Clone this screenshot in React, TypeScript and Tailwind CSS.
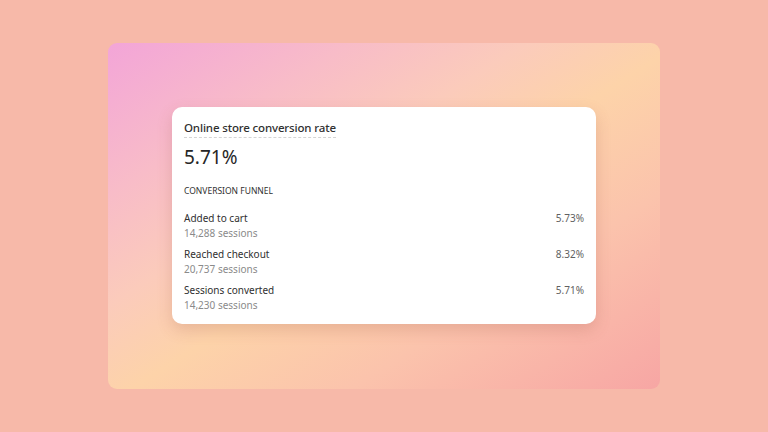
import React from "react";

const rows = [
  { label: "Added to cart", sessions: "14,288 sessions", pct: "5.73%" },
  { label: "Reached checkout", sessions: "20,737 sessions", pct: "8.32%" },
  { label: "Sessions converted", sessions: "14,230 sessions", pct: "5.71%" },
];

export default function App() {
  return (
    <div
      className="w-[768px] h-[432px] flex items-center justify-center bg-[#f7b9a9]"
      style={{ fontFamily: '"Noto Sans", "Open Sans", sans-serif' }}
    >
      <div className="w-[552px] h-[346px] rounded-[9px] p-16 flex flex-col bg-[linear-gradient(to_bottom_right,#f3a5d8_0%,#f8bcc8_22%,#fbcbbb_38%,#fdd3a9_52%,#fbc3ac_72%,#f7a6a4_100%)]">
        <div className="bg-white rounded-[10px] shadow-[0_6px_16px_rgba(150,70,60,0.2)] px-3 pt-[13px] pb-[11px] flex flex-col text-[#303030]">
          <div className="flex">
            <span className="text-[11.5px] leading-[16px] tracking-[-0.15px] font-medium text-[#303030] border-b border-dashed border-[#d4d4d4] pb-[1px]">
              Online store conversion rate
            </span>
          </div>
          <div className="text-[19px] leading-[26px] mt-[6px] font-normal text-[#262626]">5.71%</div>
          <div className="text-[8.5px] leading-[12px] mt-[15px] uppercase text-[#303030]">Conversion funnel</div>
          <div className="flex flex-col mt-[14px] gap-[6px]">
            {rows.map((r) => (
              <div key={r.label} className="flex justify-between items-start">
                <div className="flex flex-col">
                  <span className="text-[10px] leading-[15px] text-[#303030]">{r.label}</span>
                  <span className="text-[10px] leading-[15px] text-[#8a8a8a]">{r.sessions}</span>
                </div>
                <span className="text-[10px] leading-[15px] text-[#616161]">{r.pct}</span>
              </div>
            ))}
          </div>
        </div>
      </div>
    </div>
  );
}
